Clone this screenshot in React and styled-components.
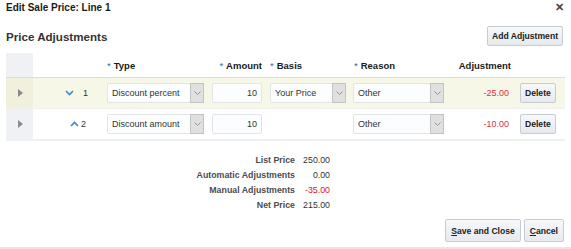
import React from 'react'
import styled, { createGlobalStyle } from 'styled-components';

const GlobalStyle = createGlobalStyle`
body {
    margin: 0;
    background: #ffffff;
    font-family: "Liberation Sans", Arial, sans-serif;
    color: #333333;
}
`;

const Dialog = styled.div`
    width: 571px;
    height: 249px;
    box-sizing: border-box;
    border-bottom: 2px solid #e6e6e6;
    display: flex;
    flex-direction: column;
`;

const TitleBar = styled.div`
    display: flex;
    justify-content: space-between;
    align-items: center;
    height: 15px;
    padding: 0 7px 0 6px;
`;

const Title = styled.div`
    font-size: 10px;
    font-weight: bold;
    color: #1a1a1a;
`;

const Close = styled.div`
    font-size: 11px;
    font-weight: bold;
    color: #444;
    line-height: 1;
`;

const SectionHeader = styled.div`
    display: flex;
    justify-content: space-between;
    align-items: center;
    padding: 0 8px 0 6px;
    margin-top: 10px;
    height: 22px;
`;

const Heading = styled.h2`
    margin: 0;
    font-size: 11.6px;
    font-weight: bold;
    color: #333;
`;

const Button = styled.button`
    font-family: "Liberation Sans", Arial, sans-serif;
    font-size: 8.6px;
    font-weight: bold;
    color: #222;
    height: ${p => p.tall ? '23px' : '20px'};
    padding: 0 ${p => p.tall ? '5px' : '4px'};
    border: 1px solid #c5ccd4;
    border-radius: 2px;
    background: linear-gradient(#f7f8fa, #e6e9ee);
    cursor: pointer;

    u { text-decoration: underline; }
`;

const Table = styled.div`
    margin: 6px 6px 0 6px;
    border-bottom: 1px solid #eef0f2;
`;

const cols = '27px 70px 105px 58px 84px 98px 67px 50px';

const Row = styled.div`
    display: grid;
    grid-template-columns: ${cols};
    align-items: center;
    height: ${p => p.header ? '24px' : '30px'};
    border-bottom: 1px solid ${p => p.header ? '#d6dfe6' : '#f0f0f0'};
    background: ${p => p.selected ? '#f7f7e8' : 'transparent'};
    font-size: 9px;
`;

const Gutter = styled.div`
    height: 100%;
    align-self: stretch;
    background: ${p => p.selected ? '#f0f0dd' : '#f0f1f5'};
    display: flex;
    align-items: center;
    justify-content: center;
`;

const Triangle = styled.span`
    width: 0;
    height: 0;
    border-top: 4px solid transparent;
    border-bottom: 4px solid transparent;
    border-left: 5px solid #8a8a8a;
    margin-left: 1px;
`;

const HeadCell = styled.div`
    font-size: 9.5px;
    font-weight: bold;
    color: #1a1a1a;
    padding: 0 4px;
    text-align: ${p => p.right ? 'right' : 'left'};
    white-space: nowrap;

    span { color: #2a6cb8; font-weight: normal; margin-right: 3px; }
`;

const Cell = styled.div`
    padding: 0 ${p => p.pr || 4}px 0 ${p => p.pl || 4}px;
    display: flex;
    align-items: center;
    justify-content: ${p => p.right ? 'flex-end' : 'flex-start'};
`;

const LineNo = styled.div`
    display: flex;
    align-items: center;
    justify-content: flex-end;
    gap: ${p => p.gap}px;
    padding-right: ${p => p.pr}px;
    color: #333;
`;

const SelectBox = styled.div`
    width: ${p => p.w}px;
    height: 20px;
    box-sizing: border-box;
    border: 1px solid #e1e5ea;
    border-radius: 2px;
    background: #fcfdfe;
    display: flex;
    align-items: center;
    justify-content: space-between;
    color: #333;
    white-space: nowrap;
`;

const SelectText = styled.span`
    padding-left: 4px;
`;

const ArrowBtn = styled.span`
    width: 14px;
    height: 20px;
    box-sizing: border-box;
    margin: -1px -1px -1px 0;
    border: 1px solid #c4c4c4;
    background: #e0e0e0;
    display: flex;
    align-items: center;
    justify-content: center;
`;

const InputBox = styled.div`
    width: 50px;
    height: 20px;
    box-sizing: border-box;
    border: 1px solid #e1e5ea;
    border-radius: 2px;
    background: #fcfdfe;
    text-align: right;
    padding-right: 4px;
    line-height: 18px;
    color: #333;
`;

const Amount = styled.span`
    color: ${p => p.neg ? '#e0303a' : '#333'};
`;

const Totals = styled.div`
    margin-top: 11px;
    display: grid;
    grid-template-columns: 295px 35px;
    grid-auto-rows: 15px;
    align-items: center;
    font-size: 8.8px;
`;

const TotalLabel = styled.div`
    text-align: right;
    font-weight: bold;
    color: #4d4d4d;
`;

const TotalValue = styled.div`
    text-align: right;
    color: ${p => p.neg ? '#d9151c' : '#333'};
`;

const Footer = styled.div`
    margin-top: 7px;
    display: flex;
    justify-content: flex-end;
    gap: 3px;
    padding-right: 7px;
`;

const SmallChevron = ({ up }) => (
    <svg width="9" height="6" viewBox="0 0 9 6">
        <path d={up ? 'M1 5 L4.5 1.5 L8 5' : 'M1 1 L4.5 4.5 L8 1'} fill="none" stroke="#3a87d0" strokeWidth="1.6" />
    </svg>
);

const SelectArrow = () => (
    <svg width="7" height="4" viewBox="0 0 7 4">
        <path d="M0.5 0.5 L3.5 3.5 L6.5 0.5" fill="none" stroke="#8a8a8a" strokeWidth="0.9" />
    </svg>
);

const Select = ({ w, value }) => (
    <SelectBox w={w}>
        <SelectText>{value}</SelectText>
        <ArrowBtn><SelectArrow /></ArrowBtn>
    </SelectBox>
);

const lines = [
    { id: 1, type: 'Discount percent', amount: 10, basis: 'Your Price', reason: 'Other', adj: '-25.00', selected: true },
    { id: 2, type: 'Discount amount', amount: 10, basis: null, reason: 'Other', adj: '-10.00', selected: false },
];

const totals = [
    { label: 'List Price', value: '250.00' },
    { label: 'Automatic Adjustments', value: '0.00' },
    { label: 'Manual Adjustments', value: '-35.00', neg: true },
    { label: 'Net Price', value: '215.00' },
];

const App = () => {
    return (
        <>
            <GlobalStyle />
            <Dialog>
                <TitleBar>
                    <Title>Edit Sale Price: Line 1</Title>
                    <Close>✕</Close>
                </TitleBar>
                <SectionHeader>
                    <Heading>Price Adjustments</Heading>
                    <Button>Add Adjustment</Button>
                </SectionHeader>
                <Table>
                    <Row header>
                        <Gutter />
                        <div />
                        <HeadCell><span>*</span>Type</HeadCell>
                        <HeadCell right><span>*</span>Amount</HeadCell>
                        <HeadCell><span>*</span>Basis</HeadCell>
                        <HeadCell><span>*</span>Reason</HeadCell>
                        <HeadCell right>Adjustment</HeadCell>
                        <div />
                    </Row>
                    {lines.map((l) => (
                        <Row key={l.id} selected={l.selected}>
                            <Gutter selected={l.selected}><Triangle /></Gutter>
                            <LineNo gap={l.selected ? 9 : 2} pr={l.selected ? 15 : 17}>
                                <SmallChevron up={!l.selected} />
                                <span>{l.id}</span>
                            </LineNo>
                            <Cell><Select w={98} value={l.type} /></Cell>
                            <Cell><InputBox>{l.amount}</InputBox></Cell>
                            <Cell>{l.basis && <Select w={77} value={l.basis} />}</Cell>
                            <Cell pl={3}><Select w={91} value={l.reason} /></Cell>
                            <Cell right pr={6}><Amount neg>{l.adj}</Amount></Cell>
                            <Cell pl={5}><Button>Delete</Button></Cell>
                        </Row>
                    ))}
                </Table>
                <Totals>
                    {totals.map((t) => (
                        <React.Fragment key={t.label}>
                            <TotalLabel>{t.label}</TotalLabel>
                            <TotalValue neg={t.neg}>{t.value}</TotalValue>
                        </React.Fragment>
                    ))}
                </Totals>
                <Footer>
                    <Button tall><u>S</u>ave and Close</Button>
                    <Button tall><u>C</u>ancel</Button>
                </Footer>
            </Dialog>
        </>
    )
}

export default App
